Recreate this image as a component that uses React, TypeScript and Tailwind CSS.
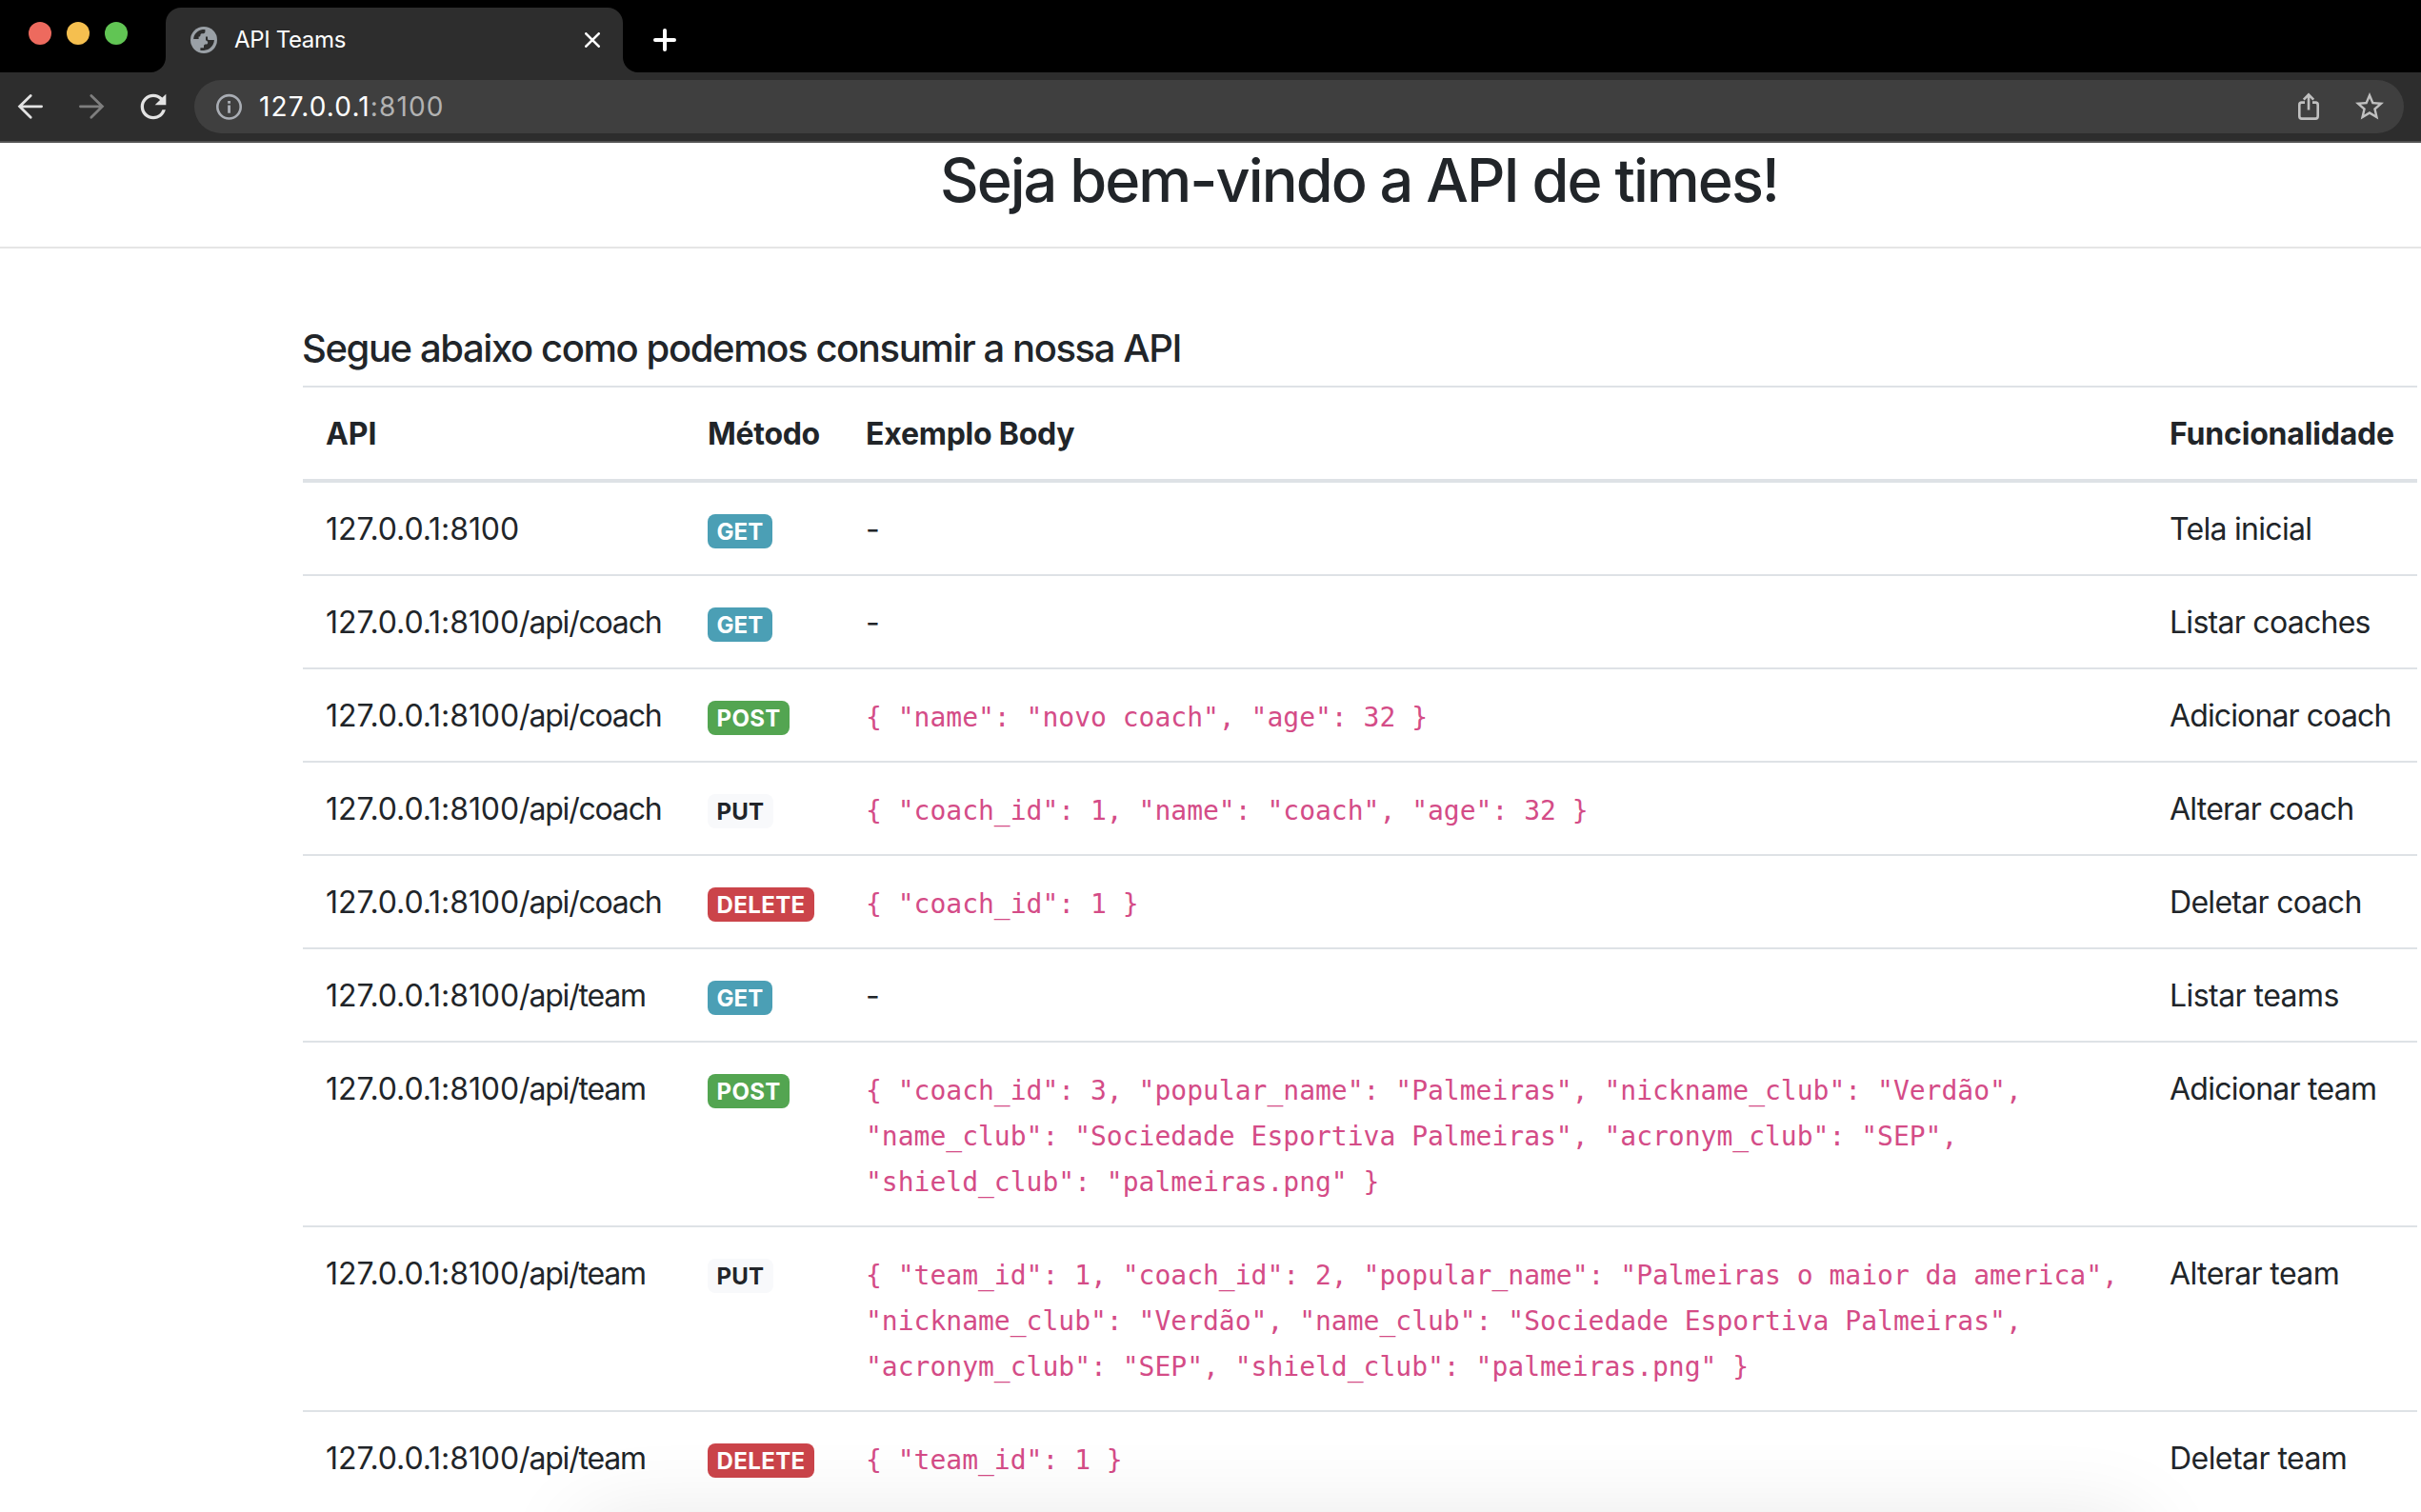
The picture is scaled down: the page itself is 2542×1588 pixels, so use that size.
import { MdRefresh, MdStarBorder } from "react-icons/md";

type Method = "GET" | "POST" | "PUT" | "DELETE";

type Endpoint = {
  path: string;
  method: Method;
  body?: string;
  label: string;
  tracking: string;
};

const badgeStyles: Record<Method, string> = {
  GET: "bg-[#4b9fb5] text-white tracking-[0px]",
  POST: "bg-[#53a551] text-white tracking-[0.3px]",
  PUT: "bg-[#f8f9fb] text-[#212529] tracking-[0.2px]",
  DELETE: "bg-[#cb444a] text-white tracking-[0.38px]",
};

const endpoints: Endpoint[] = [
  { path: "", method: "GET", label: "Tela inicial", tracking: "tracking-[-0.7px]" },
  { path: "/api/coach", method: "GET", label: "Listar coaches", tracking: "tracking-[-0.72px]" },
  {
    path: "/api/coach",
    method: "POST",
    body: '{ "name": "novo coach", "age": 32 }',
    label: "Adicionar coach",
    tracking: "tracking-[-0.87px]",
  },
  {
    path: "/api/coach",
    method: "PUT",
    body: '{ "coach_id": 1, "name": "coach", "age": 32 }',
    label: "Alterar coach",
    tracking: "tracking-[-0.75px]",
  },
  {
    path: "/api/coach",
    method: "DELETE",
    body: '{ "coach_id": 1 }',
    label: "Deletar coach",
    tracking: "tracking-[-0.7px]",
  },
  { path: "/api/team", method: "GET", label: "Listar teams", tracking: "tracking-[-0.55px]" },
  {
    path: "/api/team",
    method: "POST",
    body: '{ "coach_id": 3, "popular_name": "Palmeiras", "nickname_club": "Verdão", "name_club": "Sociedade Esportiva Palmeiras", "acronym_club": "SEP", "shield_club": "palmeiras.png" }',
    label: "Adicionar team",
    tracking: "tracking-[-0.75px]",
  },
  {
    path: "/api/team",
    method: "PUT",
    body: '{ "team_id": 1, "coach_id": 2, "popular_name": "Palmeiras o maior da america", "nickname_club": "Verdão", "name_club": "Sociedade Esportiva Palmeiras", "acronym_club": "SEP", "shield_club": "palmeiras.png" }',
    label: "Alterar team",
    tracking: "tracking-[-0.6px]",
  },
  {
    path: "/api/team",
    method: "DELETE",
    body: '{ "team_id": 1 }',
    label: "Deletar team",
    tracking: "tracking-[-0.55px]",
  },
];

function GlobeIcon() {
  return (
    <svg width="28" height="28" viewBox="0 0 28 28" className="shrink-0">
      <circle cx="14" cy="14" r="14" fill="#9aa0a6" />
      <path
        d="M3.2 13C3.6 8 7.4 4 12.6 3.1H15.4V5.4C15.4 6.6 14.4 7.2 12.6 7.2C11.2 7.2 10.4 7.8 10.4 9C10.4 10 9.8 10.6 8.6 10.6V13Z"
        fill="#2d2d2d"
      />
      <path
        d="M16 10.4H18V12.4C18 13.4 18.6 14 19.6 14H24.9C24.6 20 20 24.7 14 24.9H10.4V22.2H14V20.2C14 19.2 14.8 18.6 16.4 18.6C17.6 18.6 18.2 17.8 18.2 16.8C18.2 15.4 17.4 14.6 16 14.2Z"
        fill="#2d2d2d"
      />
    </svg>
  );
}

function TabStrip() {
  return (
    <div className="flex h-[76px] bg-black">
      <div className="flex gap-4 pt-[23px] pl-[30px]">
        <span className="size-6 rounded-full bg-[#ed6a5e]" />
        <span className="size-6 rounded-full bg-[#f5bf4f]" />
        <span className="size-6 rounded-full bg-[#61c554]" />
      </div>
      <svg width="16" height="16" className="ml-6 self-end">
        <path d="M16 0V16H0A16 16 0 0 0 16 0Z" fill="#2d2d2d" />
      </svg>
      <div className="mt-2 flex w-[480px] items-center rounded-t-[16px] bg-[#2d2d2d] pr-6 pl-[26px]">
        <GlobeIcon />
        <span className="ml-[18px] flex-1 text-[24px] leading-8 tracking-[-0.35px] text-white">
          API Teams
        </span>
        <svg width="16" height="16" viewBox="0 0 16 16" stroke="#fff" strokeWidth="2.6" strokeLinecap="round">
          <path d="M1.3 1.3L14.7 14.7M14.7 1.3L1.3 14.7" />
        </svg>
      </div>
      <svg width="16" height="16" className="self-end">
        <path d="M0 0V16H16A16 16 0 0 1 0 0Z" fill="#2d2d2d" />
      </svg>
      <svg
        width="24"
        height="24"
        viewBox="0 0 24 24"
        stroke="#fff"
        strokeWidth="4"
        strokeLinecap="round"
        className="mt-[30px] ml-4"
      >
        <path d="M12 2V22M2 12H22" />
      </svg>
    </div>
  );
}

function Toolbar() {
  return (
    <div className="flex h-[74px] items-center border-b-2 border-[#525252] bg-[#2d2d2d] pr-[18px] pl-[18px]">
      <svg width="28" height="28" viewBox="0 0 28 28" fill="none" stroke="#e3e3e3" strokeWidth="2.8" strokeLinecap="round">
        <path d="M14.2 2.4L2.6 13.8L14.2 25.2M3 13.8H25.6" />
      </svg>
      <svg
        width="28"
        height="28"
        viewBox="0 0 28 28"
        fill="none"
        stroke="#7e7e7e"
        strokeWidth="2.8"
        strokeLinecap="round"
        className="ml-9"
      >
        <path d="M13.8 2.4L25.4 13.8L13.8 25.2M25 13.8H2.4" />
      </svg>
      <MdRefresh className="ml-[31px] size-10 shrink-0 text-[#e3e3e3]" />
      <div className="ml-[23px] flex h-14 flex-1 items-center rounded-full bg-[#3f3f3f] pr-[18px] pl-[22px]">
        <svg width="28" height="28" viewBox="0 0 28 28" className="shrink-0">
          <circle cx="14.5" cy="14.3" r="12.2" fill="none" stroke="#a9adb4" strokeWidth="2.6" />
          <path d="M13.1 12.6H16V20.8H13.1ZM13.1 7.9H16V10.8H13.1Z" fill="#a9adb4" />
        </svg>
        <span className="ml-[18px] flex-1 text-[28px] leading-10 tracking-[1.15px] text-white">
          127.0.0.1<span className="text-[#b2b2b2]">:8100</span>
        </span>
        <svg
          width="24"
          height="30"
          viewBox="0 0 24 30"
          fill="none"
          stroke="#c0c0c0"
          strokeWidth="2.6"
          className="mr-[34px]"
        >
          <path d="M8 10.6H4.8C3.2 10.6 2.3 11.4 2.3 13V25C2.3 26.6 3.2 27.6 4.8 27.6H19.2C20.8 27.6 21.7 26.6 21.7 25V13C21.7 11.4 20.8 10.6 19.2 10.6H16" />
          <path d="M12 18.4V3M6.8 7.6L12 2.4L17.2 7.6" />
        </svg>
        <MdStarBorder className="size-9 shrink-0 text-[#c0c0c0]" />
      </div>
    </div>
  );
}

function EndpointTable() {
  return (
    <table className="w-[2220px] table-fixed border-separate border-spacing-0 text-left text-[32px] leading-[48px]">
      <colgroup>
        <col className="w-[401px]" />
        <col className="w-[166px]" />
        <col className="w-[1369px]" />
        <col className="w-[284px]" />
      </colgroup>
      <thead>
        <tr className="[&>th]:border-t-2 [&>th]:border-b-4 [&>th]:border-[#dee2e6] [&>th]:px-6 [&>th]:pt-[25px] [&>th]:pb-[23px] [&>th]:font-bold [&>th]:whitespace-nowrap">
          <th className="tracking-[-0.1px]">API</th>
          <th className="tracking-[-0.3px]">Método</th>
          <th className="tracking-[-0.24px]">Exemplo Body</th>
          <th className="tracking-[-0.18px]">Funcionalidade</th>
        </tr>
      </thead>
      <tbody>
        {endpoints.map((e, i) => (
          <tr
            key={i}
            className="[&>td]:border-t-2 [&>td]:border-[#dee2e6] [&>td]:px-6 [&>td]:pt-[25px] [&>td]:pb-[23px] [&>td]:align-top first:[&>td]:border-t-0"
          >
            <td className="whitespace-nowrap">
              <span className="tracking-[-0.07px]">127.0.0.1:8100</span>
              <span className="tracking-[-1.2px]">{e.path}</span>
            </td>
            <td>
              <span
                className={`inline-block rounded-lg px-[9.6px] pt-[7px] pb-[5px] text-[24px] leading-[24px] font-bold ${badgeStyles[e.method]}`}
              >
                {e.method}
              </span>
            </td>
            <td>
              {e.body ? (
                <code className="font-['DejaVu_Sans_Mono',monospace] text-[28px] leading-[42px] text-[#d44c87]">
                  {e.body}
                </code>
              ) : (
                "-"
              )}
            </td>
            <td className={`whitespace-nowrap ${e.tracking}`}>{e.label}</td>
          </tr>
        ))}
      </tbody>
    </table>
  );
}

export default function App() {
  return (
    <div className="relative flex h-[1588px] w-[2542px] flex-col overflow-hidden bg-white font-['Inter',sans-serif] text-[#212529]">
      <TabStrip />
      <Toolbar />
      <header className="h-[111px] shrink-0 border-b-2 border-[#e5e5e5] pr-[6px] pl-[318px] text-center">
        <h1 className="text-[63px] leading-[78px] font-medium tracking-[-1.95px]">Seja bem-vindo a API de times!</h1>
      </header>
      <main className="pt-[81px] pl-[318px]">
        <h4 className="-ml-px mb-[15px] text-[40px] leading-[48px] font-medium tracking-[-1.4px]">
          Segue abaixo como podemos consumir a nossa API
        </h4>
        <EndpointTable />
      </main>
      <div className="absolute top-[1596px] left-[610px] h-24 w-[1640px] rounded-3xl shadow-[0_0_90px_rgba(0,0,0,0.1)]" />
    </div>
  );
}
